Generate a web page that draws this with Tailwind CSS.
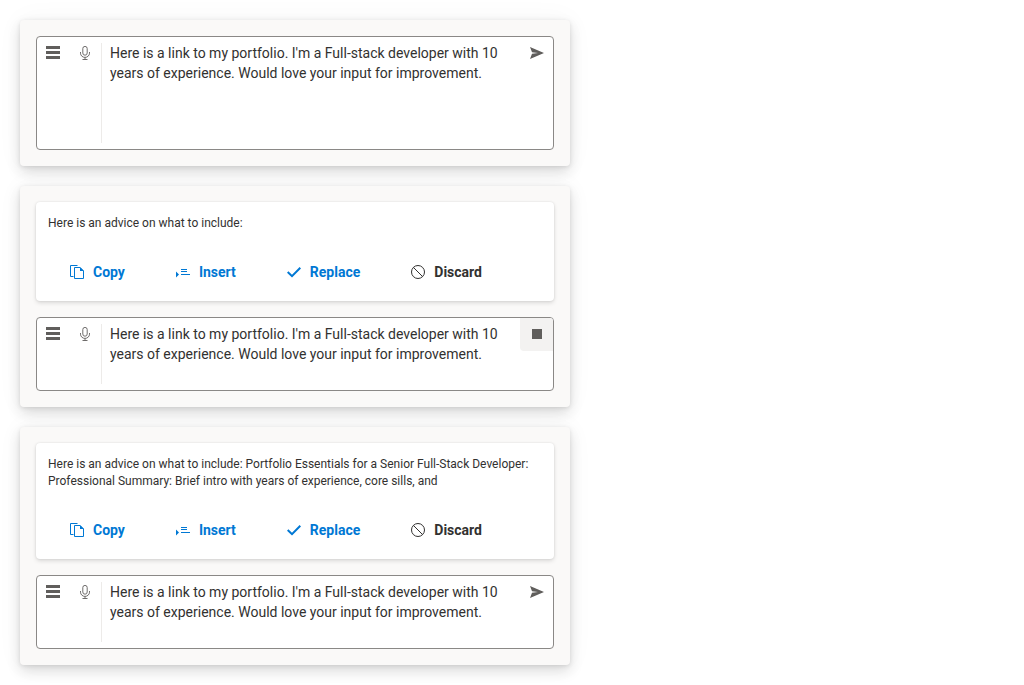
<!DOCTYPE html>
<html lang="en">
<head>
<meta charset="utf-8">
<meta name="viewport" content="width=device-width, initial-scale=1">
<title>Inline AI prompt</title>
<script src="https://cdn.jsdelivr.net/npm/@tailwindcss/browser@4"></script>
</head>
<body class="bg-white font-['Roboto',sans-serif] text-[#323130]">
<svg class="hidden" aria-hidden="true">
  <symbol id="menu" viewBox="0 0 14 14"><path d="M0 0h14v3H0zM0 5h14v3H0zM0 10h14v3H0z" fill="currentColor"/></symbol>
  <symbol id="mic" viewBox="0 0 14 14"><g fill="none" stroke="currentColor" stroke-width=".9"><path d="M4.8 2.6A2.2 2.2 0 0 1 9.2 2.6V7A2.2 2.2 0 0 1 4.8 7ZM2.5 6V7.2A4.5 4.2 0 0 0 11.5 7.2V6M7 11.4V13.5M4.5 13.5H9.5"/></g></symbol>
  <symbol id="send" viewBox="0 0 14 14"><path d="M0 1 14 7 0 13 2 7.8 8 7 2 6.2Z" fill="currentColor"/></symbol>
  <symbol id="stop" viewBox="0 0 14 14"><path d="M2 2h10v10H2z" fill="currentColor"/></symbol>
  <symbol id="copy" viewBox="0 0 14 14"><path d="M3.5 11.5H.5V.5H7.5M4.5 2.5H10L13.5 6V13.5H4.5Z" fill="none" stroke="currentColor"/><path d="M10 2v4h4Z" fill="currentColor"/></symbol>
  <symbol id="insert" viewBox="0 0 14 14"><path d="M0 6.5 3 9.5 0 12.5ZM5 4h6v1H5zM5 6h6v1H5zM5 9h9v1H5z" fill="currentColor"/></symbol>
  <symbol id="check" viewBox="0 0 14 14"><path d="M.7 7 5 11.2 13.3 2.8" fill="none" stroke="currentColor" stroke-width="2"/></symbol>
  <symbol id="discard" viewBox="0 0 14 14"><path d="M13.5 7A6.5 6.5 0 1 1 .5 7 6.5 6.5 0 0 1 13.5 7ZM2.4 2.4 11.6 11.6" fill="none" stroke="currentColor"/></symbol>
</svg>
<main class="flex max-w-[590px] flex-col gap-5 p-5">

  <section class="rounded bg-[#faf9f8] p-4 shadow-[0_6px_14px_rgba(0,0,0,0.13),0_1px_4px_rgba(0,0,0,0.1),0_0_28px_rgba(0,0,0,0.04)]">
    <div class="flex items-start overflow-hidden rounded border border-[#8a8886] bg-white text-[#605e5c]">
      <button type="button" aria-label="Commands" class="flex size-8 items-center justify-center"><svg class="size-3.5"><use href="#menu"/></svg></button>
      <button type="button" aria-label="Speech to text" class="flex size-8 items-center justify-center"><svg class="size-3.5"><use href="#mic"/></svg></button>
      <span class="my-1.5 w-px self-stretch bg-[#edebe9]"></span>
      <textarea aria-label="Prompt" class="h-28 min-w-0 flex-1 resize-none overflow-hidden px-2 py-1.5 text-sm/5 text-[#323130] outline-none">Here is a link to my portfolio. I'm a Full-stack developer with 10 years of experience. Would love your input for improvement.</textarea>
      <button type="button" aria-label="Send" class="flex size-8 items-center justify-center"><svg class="size-3.5"><use href="#send"/></svg></button>
    </div>
  </section>

  <section class="flex flex-col gap-4 rounded bg-[#faf9f8] p-4 shadow-[0_6px_14px_rgba(0,0,0,0.13),0_1px_4px_rgba(0,0,0,0.1),0_0_28px_rgba(0,0,0,0.04)]">
    <article class="rounded bg-white px-3 py-[13px] shadow-[0_2px_4px_rgba(0,0,0,0.13),0_0_2px_rgba(0,0,0,0.11)]">
      <p class="text-xs/[17px]">Here is an advice on what to include:</p>
      <div class="mt-6 flex h-8 gap-[11px] pl-0.5 text-sm font-bold text-[#0078d4]">
        <button type="button" class="flex items-center gap-[9px] px-5"><svg class="size-3.5"><use href="#copy"/></svg>Copy</button>
        <button type="button" class="flex items-center gap-[9px] px-5"><svg class="size-3.5"><use href="#insert"/></svg>Insert</button>
        <button type="button" class="flex items-center gap-[9px] px-5"><svg class="size-3.5"><use href="#check"/></svg>Replace</button>
        <button type="button" class="flex items-center gap-[9px] px-5 text-[#323130]"><svg class="size-3.5"><use href="#discard"/></svg>Discard</button>
      </div>
    </article>
    <div class="flex items-start overflow-hidden rounded border border-[#8a8886] bg-white text-[#605e5c]">
      <button type="button" aria-label="Commands" class="flex size-8 items-center justify-center"><svg class="size-3.5"><use href="#menu"/></svg></button>
      <button type="button" aria-label="Speech to text" class="flex size-8 items-center justify-center"><svg class="size-3.5"><use href="#mic"/></svg></button>
      <span class="my-1.5 w-px self-stretch bg-[#edebe9]"></span>
      <textarea aria-label="Prompt" class="h-18 min-w-0 flex-1 resize-none overflow-hidden px-2 py-1.5 text-sm/5 text-[#323130] outline-none">Here is a link to my portfolio. I'm a Full-stack developer with 10 years of experience. Would love your input for improvement.</textarea>
      <button type="button" aria-label="Stop" class="flex size-[33px] items-start justify-center rounded-bl bg-[#f3f2f1] pt-[9px]"><svg class="size-3.5"><use href="#stop"/></svg></button>
    </div>
  </section>

  <section class="flex flex-col gap-4 rounded bg-[#faf9f8] p-4 shadow-[0_6px_14px_rgba(0,0,0,0.13),0_1px_4px_rgba(0,0,0,0.1),0_0_28px_rgba(0,0,0,0.04)]">
    <article class="rounded bg-white px-3 py-[13px] shadow-[0_2px_4px_rgba(0,0,0,0.13),0_0_2px_rgba(0,0,0,0.11)]">
      <p class="text-xs/[17px]">Here is an advice on what to include: Portfolio Essentials for a Senior Full-Stack Developer: Professional Summary: Brief intro with years of experience, core sills, and</p>
      <div class="mt-6 flex h-8 gap-[11px] pl-0.5 text-sm font-bold text-[#0078d4]">
        <button type="button" class="flex items-center gap-[9px] px-5"><svg class="size-3.5"><use href="#copy"/></svg>Copy</button>
        <button type="button" class="flex items-center gap-[9px] px-5"><svg class="size-3.5"><use href="#insert"/></svg>Insert</button>
        <button type="button" class="flex items-center gap-[9px] px-5"><svg class="size-3.5"><use href="#check"/></svg>Replace</button>
        <button type="button" class="flex items-center gap-[9px] px-5 text-[#323130]"><svg class="size-3.5"><use href="#discard"/></svg>Discard</button>
      </div>
    </article>
    <div class="flex items-start overflow-hidden rounded border border-[#8a8886] bg-white text-[#605e5c]">
      <button type="button" aria-label="Commands" class="flex size-8 items-center justify-center"><svg class="size-3.5"><use href="#menu"/></svg></button>
      <button type="button" aria-label="Speech to text" class="flex size-8 items-center justify-center"><svg class="size-3.5"><use href="#mic"/></svg></button>
      <span class="my-1.5 w-px self-stretch bg-[#edebe9]"></span>
      <textarea aria-label="Prompt" class="h-18 min-w-0 flex-1 resize-none overflow-hidden px-2 py-1.5 text-sm/5 text-[#323130] outline-none">Here is a link to my portfolio. I'm a Full-stack developer with 10 years of experience. Would love your input for improvement.</textarea>
      <button type="button" aria-label="Send" class="flex size-8 items-center justify-center"><svg class="size-3.5"><use href="#send"/></svg></button>
    </div>
  </section>

</main>
</body>
</html>
